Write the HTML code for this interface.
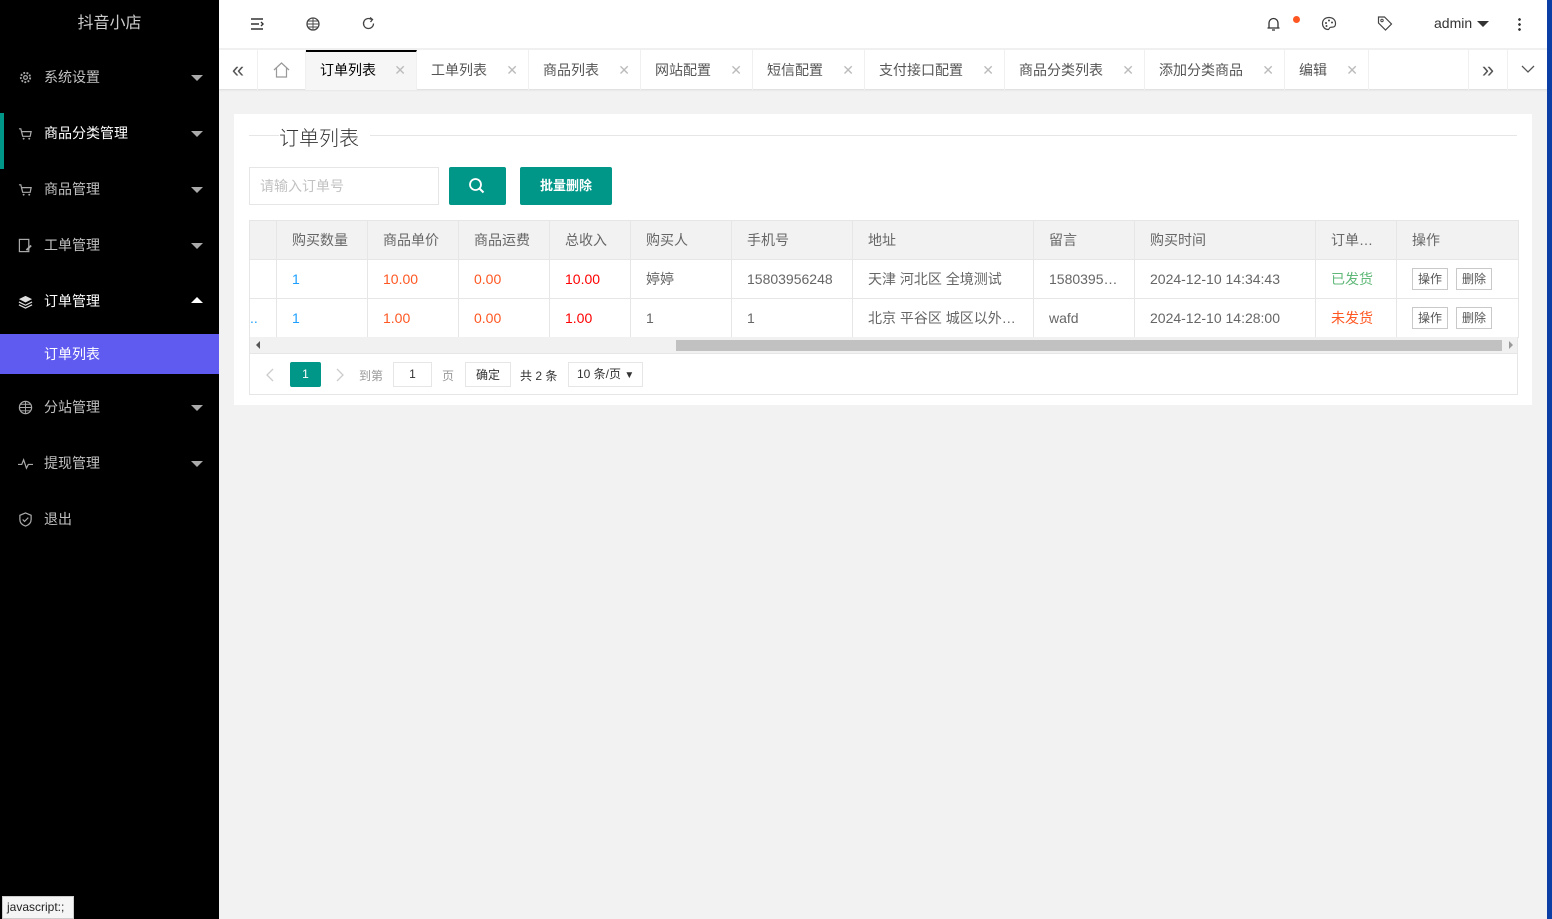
<!DOCTYPE html>
<html><head><meta charset="utf-8"><style>
*{margin:0;padding:0;box-sizing:border-box}
body{width:1552px;height:919px;overflow:hidden;background:#f2f2f2;font-family:"Liberation Sans","Noto Sans CJK SC",sans-serif;font-size:14px;color:#555;position:relative}
.side{position:absolute;left:0;top:0;width:219px;height:919px;background:#000}
.logo{height:48px;line-height:48px;text-align:center;color:#ccc;font-size:16px}
.mi{position:absolute;left:0;width:219px;height:56px;line-height:56px;color:rgba(255,255,255,.75);font-size:14px;padding-left:44px}
.mi .ic{position:absolute;left:18px;top:21px;width:15px;height:15px}
.mi .ar{position:absolute;right:16px;top:26px;width:0;height:0;border:6px solid transparent;border-top-color:#aaa;border-bottom:none}
.mi .up{border-top:none;border-bottom:6px solid #fff;top:24px}
.sub{position:absolute;left:0;top:334px;width:219px;height:40px;line-height:40px;background:#5f5af0;color:#fff;padding-left:44px}
.hd{position:absolute;left:219px;top:0;right:0;height:48px;background:#fff}
.tabs{position:absolute;left:219px;top:49px;right:0;height:40px;background:#fff;border-top:1px solid #f0f0f0;box-shadow:0 1px 2px rgba(0,0,0,.1)}
.tab{position:absolute;top:0;height:40px;line-height:40px;font-size:14px;color:#555;border-right:1px solid #f0f0f0;padding-left:14px}
.tab .x{position:absolute;right:10px;color:#bbb;font-size:14px}
.card{position:absolute;left:234px;top:114px;width:1298px;height:291px;background:#fff}
table{border-collapse:collapse;table-layout:fixed;position:absolute;left:249px;top:220px;width:1269px}
td{border:1px solid #e6e6e6;height:39px;padding:0 15px;white-space:nowrap;overflow:hidden;font-size:14px;color:#666}
thead td{background:#f2f2f2}
.b{color:#1e9fff}.o{color:#ff5722}.r{color:#f00}
.sb{display:inline-block;border:1px solid #c9c9c9;font-size:12px;padding:0 5px;height:22px;line-height:20px;margin-right:8px;color:#555}
</style></head><body>
<div class="side">
<div class="logo">抖音小店</div>
<div class="mi" style="top:49px"><svg class="ic" viewBox="0 0 16 16"><circle cx="8" cy="8" r="5" fill="none" stroke="#aaa" stroke-width="2" stroke-dasharray="2 1.5"/><circle cx="8" cy="8" r="2" fill="none" stroke="#aaa" stroke-width="1.3"/></svg>系统设置<span class="ar"></span></div>
<div style="position:absolute;left:0;top:113px;width:4px;height:56px;background:#009688"></div>
<div class="mi" style="top:105px;color:#fff"><svg class="ic" viewBox="0 0 16 16"><path d="M1 3h2l2 8h8l1-5H4" fill="none" stroke="#aaa" stroke-width="1.3"/><circle cx="6" cy="13.5" r="1" fill="#aaa"/><circle cx="12" cy="13.5" r="1" fill="#aaa"/></svg>商品分类管理<span class="ar"></span></div>
<div class="mi" style="top:161px"><svg class="ic" viewBox="0 0 16 16"><path d="M1 3h2l2 8h8l1-5H4" fill="none" stroke="#aaa" stroke-width="1.3"/><circle cx="6" cy="13.5" r="1" fill="#aaa"/><circle cx="12" cy="13.5" r="1" fill="#aaa"/></svg>商品管理<span class="ar"></span></div>
<div class="mi" style="top:217px"><svg class="ic" viewBox="0 0 16 16"><rect x="1.5" y="1.5" width="10" height="13" fill="none" stroke="#aaa" stroke-width="1.3"/><path d="M9 13l5-5" stroke="#aaa" stroke-width="2"/></svg>工单管理<span class="ar"></span></div>
<div class="mi" style="top:273px;color:#fff"><svg class="ic" viewBox="0 0 16 16"><path d="M8 2l7 3.5-7 3.5-7-3.5z" fill="#ddd"/><path d="M1 8.5l7 3.5 7-3.5M1 11.5l7 3.5 7-3.5" fill="none" stroke="#ddd" stroke-width="1.3"/></svg>订单管理<span class="ar up"></span></div>
<div class="sub">订单列表</div>
<div class="mi" style="top:379px"><svg class="ic" viewBox="0 0 16 16"><circle cx="8" cy="8" r="6.5" fill="none" stroke="#aaa" stroke-width="1.3"/><path d="M1.5 8h13M8 1.5v13M3 4.5h10M3 11.5h10" stroke="#aaa"/></svg>分站管理<span class="ar"></span></div>
<div class="mi" style="top:435px"><svg class="ic" viewBox="0 0 16 16"><path d="M0 9h4l2-5 3 9 2-4h5" fill="none" stroke="#aaa" stroke-width="1.3"/></svg>提现管理<span class="ar"></span></div>
<div class="mi" style="top:491px"><svg class="ic" viewBox="0 0 16 16"><path d="M8 1l6 2.5v4.5c0 4-3 6-6 7-3-1-6-3-6-7V3.5z" fill="none" stroke="#aaa" stroke-width="1.3"/><path d="M5 8l2 2 4-4" fill="none" stroke="#aaa" stroke-width="1.3"/></svg>退出</div>
</div>
<div class="hd">
<svg style="position:absolute;left:31px;top:17px" width="14" height="14" viewBox="0 0 14 14"><path d="M1 2h12M1 7h8M1 12h12M11 5l2 2-2 2" fill="none" stroke="#333" stroke-width="1.4"/></svg>
<svg style="position:absolute;left:87px;top:17px" width="14" height="14" viewBox="0 0 14 14"><circle cx="7" cy="7" r="6" fill="none" stroke="#444" stroke-width="1.3"/><path d="M1 7h12M7 1v12M2.5 4h9M2.5 10h9" stroke="#444" stroke-width=".9"/></svg>
<svg style="position:absolute;left:142px;top:16px" width="15" height="15" viewBox="0 0 15 15"><path d="M12.5 7.5A5 5 0 1 1 10.5 3.5" fill="none" stroke="#444" stroke-width="1.3"/><path d="M9 1.5l2.5 2-2 2.5" fill="none" stroke="#444" stroke-width="1.3"/></svg>
<svg style="position:absolute;left:1047px;top:16px" width="15" height="16" viewBox="0 0 15 16"><path d="M3 12V7a4.5 4.5 0 0 1 9 0v5zM1.5 12h12M6 14h3" fill="none" stroke="#333" stroke-width="1.3"/></svg>
<div style="position:absolute;left:1074px;top:16px;width:7px;height:7px;border-radius:50%;background:#ff5722"></div>
<svg style="position:absolute;left:1102px;top:16px" width="16" height="15" viewBox="0 0 16 15"><path d="M8 1.5C4 1.5 1.5 4 1.5 7.5S4 13.5 7 13.5c1.5 0 1-2 2.5-2.2S14.5 12 14.5 7.5C14.5 4 12 1.5 8 1.5z" fill="none" stroke="#444" stroke-width="1.2"/><circle cx="5" cy="7" r="1" fill="#444"/><circle cx="8" cy="4.5" r="1" fill="#444"/><circle cx="11" cy="6.5" r="1" fill="#444"/><circle cx="5.5" cy="10" r="1" fill="#444"/></svg>
<svg style="position:absolute;left:1158px;top:15px" width="16" height="17" viewBox="0 0 16 17"><path d="M1.5 2v6l7 7 6-6-7-7z" fill="none" stroke="#444" stroke-width="1.2"/><circle cx="5" cy="5.5" r="1.2" fill="none" stroke="#444"/></svg>
<div style="position:absolute;left:1215px;top:15px;font-size:14px;color:#333">admin</div>
<div style="position:absolute;left:1258px;top:21px;border:6px solid transparent;border-top:6px solid #333;border-bottom:none"></div>
<div style="position:absolute;left:1299px;top:17px;width:3px;height:14px;background:radial-gradient(circle,#333 1.2px,transparent 1.5px) 0 0/3px 5px"></div>
</div>
<div class="tabs">
<div class="tab" style="left:0;width:39px;padding:0;text-align:center;font-size:22px;color:#555">«</div>
<div class="tab" style="left:39px;width:48px;padding:0"><svg style="position:absolute;left:15px;top:12px" width="17" height="16" viewBox="0 0 17 16"><path d="M1 8L8.5 1 16 8M3.5 6v9h10V6" fill="none" stroke="#999" stroke-width="1.2"/></svg></div>
<div class="tab" style="left:87px;width:111px;background:#f6f6f6;border-top:2px solid #000;line-height:36px;color:#000">订单列表<span class="x">✕</span></div>
<div class="tab" style="left:198px;width:112px">工单列表<span class="x">✕</span></div>
<div class="tab" style="left:310px;width:112px">商品列表<span class="x">✕</span></div>
<div class="tab" style="left:422px;width:112px">网站配置<span class="x">✕</span></div>
<div class="tab" style="left:534px;width:112px">短信配置<span class="x">✕</span></div>
<div class="tab" style="left:646px;width:140px">支付接口配置<span class="x">✕</span></div>
<div class="tab" style="left:786px;width:140px">商品分类列表<span class="x">✕</span></div>
<div class="tab" style="left:926px;width:140px">添加分类商品<span class="x">✕</span></div>
<div class="tab" style="left:1066px;width:84px">编辑<span class="x">✕</span></div>
<div class="tab" style="left:1249px;width:40px;padding:0;text-align:center;font-size:22px;border-left:1px solid #f0f0f0">»</div>
<div class="tab" style="left:1289px;width:40px;padding:0"><svg style="position:absolute;left:13px;top:15px" width="14" height="9" viewBox="0 0 14 9"><path d="M1 1l6 6 6-6" fill="none" stroke="#555" stroke-width="1.3"/></svg></div>
</div>
<div style="position:absolute;left:1547px;top:0;width:5px;height:919px;background:#0b3fa6"></div>
<div class="card">
<div style="position:absolute;left:15px;top:21px;width:30px;border-top:1px solid #e6e6e6"></div>
<div style="position:absolute;left:45px;top:8px;font-size:20px;color:#333;font-weight:300">订单列表</div>
<div style="position:absolute;left:136px;top:21px;right:15px;border-top:1px solid #e6e6e6"></div>
<div style="position:absolute;left:15px;top:53px;width:190px;height:38px;border:1px solid #e6e6e6;line-height:36px;padding-left:10px;color:#c2c2c2">请输入订单号</div>
<div style="position:absolute;left:215px;top:53px;width:57px;height:38px;background:#009688;border-radius:2px"><svg style="position:absolute;left:19px;top:10px" width="18" height="18" viewBox="0 0 18 18"><circle cx="7.5" cy="7.5" r="5.5" fill="none" stroke="#fff" stroke-width="1.8"/><path d="M11.5 11.5l4 4" stroke="#fff" stroke-width="2"/></svg></div>
<div style="position:absolute;left:286px;top:53px;width:92px;height:38px;background:#009688;border-radius:2px;color:#fff;text-align:center;line-height:38px;font-weight:bold;font-size:13px">批量删除</div>
</div>
<table>
<colgroup><col style="width:27px"><col style="width:91px"><col style="width:91px"><col style="width:91px"><col style="width:81px"><col style="width:101px"><col style="width:121px"><col style="width:181px"><col style="width:101px"><col style="width:181px"><col style="width:81px"><col style="width:122px"></colgroup>
<thead><tr><td></td><td>购买数量</td><td>商品单价</td><td>商品运费</td><td>总收入</td><td>购买人</td><td>手机号</td><td>地址</td><td>留言</td><td>购买时间</td><td>订单…</td><td>操作</td></tr></thead>
<tr><td></td><td class="b">1</td><td class="o">10.00</td><td class="o">0.00</td><td class="r">10.00</td><td>婷婷</td><td>15803956248</td><td>天津 河北区 全境测试</td><td>1580395…</td><td>2024-12-10 14:34:43</td><td style="color:#5fb878">已发货</td><td><span class="sb">操作</span><span class="sb">删除</span></td></tr>
<tr><td style="padding:0;color:#1e9fff">..</td><td class="b">1</td><td class="o">1.00</td><td class="o">0.00</td><td class="r">1.00</td><td>1</td><td>1</td><td>北京 平谷区 城区以外…</td><td>wafd</td><td>2024-12-10 14:28:00</td><td class="o">未发货</td><td><span class="sb">操作</span><span class="sb">删除</span></td></tr>
</table>
<div style="position:absolute;left:249px;top:337px;width:1269px;height:17px;background:#f1f1f1;border:1px solid #e6e6e6;border-top:none">
<div style="position:absolute;left:6px;top:4px;border:4px solid transparent;border-right:4px solid #555;border-left:none"></div>
<div style="position:absolute;left:426px;top:3px;width:826px;height:11px;background:#c1c1c1"></div>
<div style="position:absolute;right:4px;top:4px;border:4px solid transparent;border-left:4px solid #999;border-right:none"></div>
</div>
<div style="position:absolute;left:249px;top:354px;width:1269px;height:41px;border:1px solid #e6e6e6;border-top:none;font-size:12px;color:#666">
<svg style="position:absolute;left:16px;top:14px" width="8" height="14" viewBox="0 0 8 14"><path d="M7 1L1 7l6 6" fill="none" stroke="#ccc" stroke-width="1.3"/></svg>
<div style="position:absolute;left:40px;top:8px;width:31px;height:25px;background:#009688;color:#fff;text-align:center;line-height:25px;border-radius:2px">1</div>
<svg style="position:absolute;left:86px;top:14px" width="8" height="14" viewBox="0 0 8 14"><path d="M1 1l6 6-6 6" fill="none" stroke="#ccc" stroke-width="1.3"/></svg>
<span style="position:absolute;left:109px;top:13px;color:#999">到第</span>
<div style="position:absolute;left:143px;top:8px;width:39px;height:25px;border:1px solid #e6e6e6;text-align:center;line-height:23px;color:#333">1</div>
<span style="position:absolute;left:192px;top:13px;color:#999">页</span>
<div style="position:absolute;left:215px;top:8px;width:46px;height:25px;border:1px solid #e6e6e6;text-align:center;line-height:25px;color:#333">确定</div>
<span style="position:absolute;left:270px;top:13px;color:#333">共 2 条</span>
<div style="position:absolute;left:318px;top:8px;width:75px;height:25px;border:1px solid #e6e6e6;line-height:23px;padding-left:8px;color:#333">10 条/页 <span style="font-size:10px">▼</span></div>
</div>
<div style="position:absolute;left:2px;top:896px;width:72px;height:23px;background:#f5f5f5;border:1px solid #ccc;font-size:12px;line-height:21px;padding-left:4px;color:#222">javascript:;</div>
</body></html>
